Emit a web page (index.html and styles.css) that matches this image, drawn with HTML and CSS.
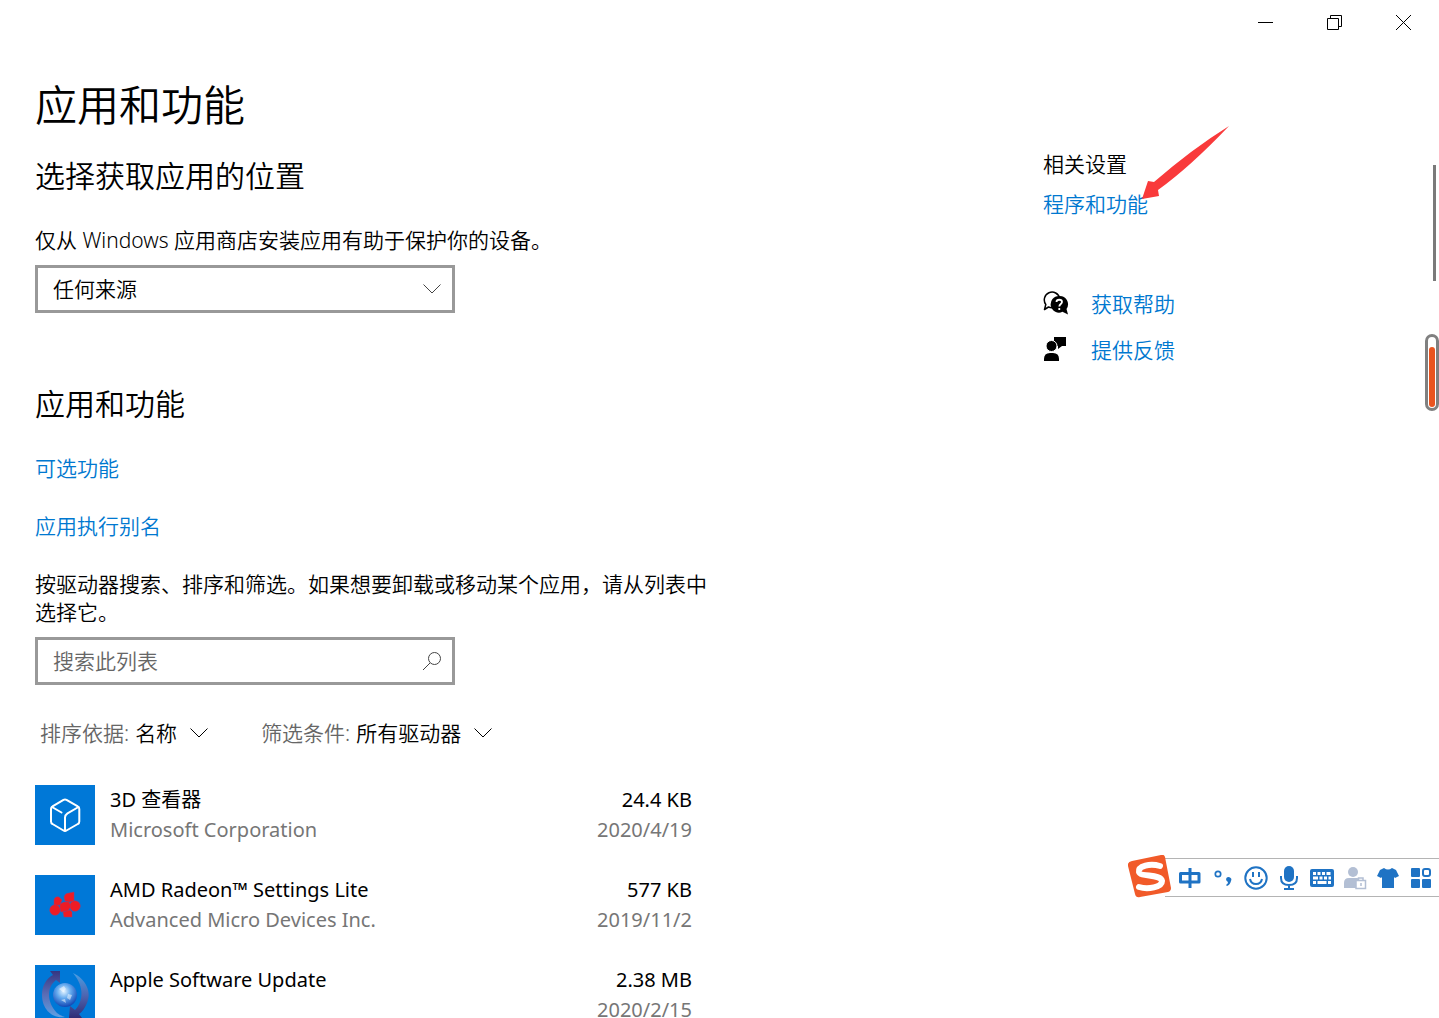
FILE: index.html
```html
<!DOCTYPE html>
<html lang="zh-CN">
<head>
<meta charset="utf-8">
<meta name="viewport" content="width=device-width, initial-scale=1">
<title>设置</title>
<link rel="stylesheet" href="styles.css">
</head>
<body>
<header class="titlebar">
	<button type="button" aria-label="最小化"><svg width="17" height="17" viewBox="0 0 17 17"><path d="M1 8.500h15"/></svg></button>
	<button type="button" aria-label="还原"><svg width="17" height="17" viewBox="0 0 17 17"><path d="M1.500 4.500h11v11h-11zM4.500 4.500v-3h11v11h-3"/></svg></button>
	<button type="button" aria-label="关闭"><svg width="17" height="17" viewBox="0 0 17 17"><path d="M1 1l15 15M16 1L1 16"/></svg></button>
</header>
<div class="page">
	<main class="content">
		<h1>应用和功能</h1>
		<section class="source">
			<h2>选择获取应用的位置</h2>
			<label for="source">仅从 Windows 应用商店安装应用有助于保护你的设备。</label>
			<div class="field">
				<select id="source">
					<option>任何来源</option>
				</select>
				<svg class="chevron" width="20" height="12" viewBox="0 0 20 12"><path d="M1.500 1.500L10 10l8.500-8.500"/></svg>
			</div>
		</section>
		<section class="apps">
			<h2>应用和功能</h2>
			<a class="option" href="#">可选功能</a>
			<a class="option" href="#">应用执行别名</a>
			<label for="search">按驱动器搜索、排序和筛选。如果想要卸载或移动某个应用，请从列表中选择它。</label>
			<div class="field">
				<input type="text" id="search" placeholder="搜索此列表">
				<svg class="glass" width="20" height="20" viewBox="0 0 20 20"><circle cx="12.500" cy="7.500" r="6"/><path d="M8 12l-7 7"/></svg>
			</div>
			<div class="filters">
				<div class="filter">
					<label for="sort">排序依据:</label>
					<select id="sort"><option>名称</option></select>
					<svg class="chevron dark" width="20" height="12" viewBox="0 0 20 12"><path d="M1.500 1.500L10 10l8.500-8.500"/></svg>
				</div>
				<div class="filter">
					<label for="drive">筛选条件:</label>
					<select id="drive"><option>所有驱动器</option></select>
					<svg class="chevron dark" width="20" height="12" viewBox="0 0 20 12"><path d="M1.500 1.500L10 10l8.500-8.500"/></svg>
				</div>
			</div>
			<ul class="appList">
				<li>
					<svg class="appIcon" viewBox="0 0 60 60">
						<g fill="none" stroke="#fff" stroke-width="2" stroke-linejoin="round" stroke-linecap="round"><path d="M28.500 14.800Q30 14 31.500 14.800L42.800 21.300Q44.300 22 44.300 24V36.500Q44.300 38.300 42.800 39L31.500 45.500Q30 46.500 28.500 45.500L17.500 39Q16 38.300 16 36.500V24Q16 22 17.500 21.300z"/><path d="M17 22l9.500 5.500M43.500 22L32.500 28.300Q30 30 30 32.500V45.500"/></g>
					</svg>
					<div class="info"><p>3D 查看器</p><span>Microsoft Corporation</span></div>
					<div class="size"><p>24.4 KB</p><span>2020/4/19</span></div>
				</li>
				<li>
					<svg class="appIcon" viewBox="0 0 60 60">
						<g fill="#ee1c25" stroke="#a03a70" stroke-width=".5"><path d="M29 22q1-4 5-4l5-1v9l-5 1-4-1z"/><path d="M19 25q1-4 5-3l3 3-2 5-6 1z"/><circle cx="20" cy="35" r="5.300"/><circle cx="40" cy="31" r="5.300"/><path d="M25 29q4-3 9-2l2 4-3 5-7 1-1-4z"/><path d="M28 37l7-2 2 2v5h-8z"/></g>
					</svg>
					<div class="info"><p>AMD Radeon™ Settings Lite</p><span>Advanced Micro Devices Inc.</span></div>
					<div class="size"><p>577 KB</p><span>2019/11/2</span></div>
				</li>
				<li>
					<svg class="appIcon" viewBox="0 0 60 60">
						<defs>
							<radialGradient id="globe" cx="45%" cy="35%" r="65%"><stop offset="0" stop-color="#e5f4ff"/><stop offset=".45" stop-color="#63a9ee"/><stop offset="1" stop-color="#1247b4"/></radialGradient>
							<linearGradient id="arcLeft" x1="0" y1="0" x2="0" y2="1"><stop offset="0" stop-color="#353581"/><stop offset=".5" stop-color="#5a6cb4"/><stop offset="1" stop-color="#5fa0e4"/></linearGradient>
							<linearGradient id="arcRight" x1="0" y1="0" x2="0" y2="1"><stop offset="0" stop-color="#4b9fe4"/><stop offset=".5" stop-color="#4e65b0"/><stop offset="1" stop-color="#302c76"/></linearGradient>
						</defs>
						<path fill="url(#arcLeft)" d="M15 6h10v12l-4-3C12 22 11 36 22 48 26 51 30 52 30 52 17 54 7 44 7 30 7 20 12 13 18 10z"/>
						<path fill="url(#arcRight)" d="M38 8C51 14 57 27 52 38c-2 5-5 9-8 11l3 4H34l1-12 5 4c8-8 10-23-2-37z"/>
						<circle cx="30" cy="30" r="12" fill="url(#globe)"/>
						<path fill="#fff" fill-opacity=".5" d="M24 24l5-3 2 3-3 3zM33 29l4 1-2 5-3-2zM26 35l4-1 1 4z"/>
					</svg>
					<div class="info"><p>Apple Software Update</p></div>
					<div class="size"><p>2.38 MB</p><span>2020/2/15</span></div>
				</li>
			</ul>
		</section>
	</main>
	<aside class="related">
		<h3>相关设置</h3>
		<div class="programs">
			<a href="#">程序和功能</a>
			<svg class="arrow" width="90" height="76" viewBox="0 0 90 76"><path fill="#f93a3b" d="M89 1Q52 24 14 57L8 56 2 74l17-3-1-6Q50 42 89 1z"/></svg>
		</div>
		<ul class="support">
			<li>
				<svg width="26" height="26" viewBox="0 0 26 26"><path fill="#fff" stroke="#000" stroke-width="1.500" stroke-linejoin="round" d="M1.500 18.500l1.300-5a7.800 7.800 0 1 1 6.200 3.200q-2 0-3.500-.7z"/><path d="M16 5a8.300 8.300 0 1 0 3.500 15.800l5.500 2.700-1.500-5.500A8.300 8.300 0 0 0 16 5z"/><path fill="none" stroke="#fff" stroke-width="1.800" d="M13.500 11c0-3 5.500-3 5.500 0 0 2-2.700 2-2.700 4.500M16.300 17v2"/></svg>
				<a href="#">获取帮助</a>
			</li>
			<li>
				<svg width="26" height="26" viewBox="0 0 26 26"><path d="M11 0h12v9h-4l-4 3V9h-4z"/><circle cx="8.500" cy="9" r="5.500" stroke="#fff"/><path d="M1 24v-2q0-6 6-6h3q6 0 6 6v2z"/></svg>
				<a href="#">提供反馈</a>
			</li>
		</ul>
	</aside>
</div>

<!-- 滚动条 -->
<div class="scrollbar"></div>
<div class="gauge"><i></i></div>

<!-- 输入法工具栏 -->
<div class="ime">
	<svg class="logo" width="46" height="44" viewBox="0 0 46 44"><path fill="#f15a29" d="M4 6L33 0q3-1 4 2l6 31q0 3-3 4L12 42q-4 1-5-3L0 11q-1-4 4-5z"/><path fill="none" stroke="#fff" stroke-width="6" stroke-linecap="round" d="M32 11C22 8 10 11 11 17c1 5 22 2 23 9 0 6-14 9-23 6"/></svg>
	<button type="button" aria-label="中文"><svg width="24" height="24" viewBox="0 0 24 24"><path fill="none" stroke="#1f73c4" stroke-width="3" stroke-linejoin="round" d="M2.500 7.500h18.500v8.500H2.500zM12 2v20"/></svg></button>
	<button type="button" aria-label="标点"><svg width="24" height="24" viewBox="0 0 24 24"><circle cx="7" cy="8" r="2.700" fill="none" stroke="#1f73c4" stroke-width="1.700"/><path d="M15 13a2.700 2.700 0 1 1 5 2q-1 4-4 5l-1-1q2-1 2-3-2-1-2-3z"/></svg></button>
	<button type="button" aria-label="表情"><svg width="24" height="24" viewBox="0 0 24 24"><g fill="none" stroke="#1f73c4" stroke-width="2"><circle cx="12" cy="12" r="10.700"/><path d="M9 6v5M15 6v5M6 13q1 5 6 5t6-5"/></g></svg></button>
	<button type="button" aria-label="语音"><svg width="24" height="24" viewBox="0 0 24 24"><rect x="7" y="0" width="10" height="16" rx="5"/><path fill="none" stroke="#1f73c4" stroke-width="2" d="M4 10v2q0 7 8 7t8-7v-2M12 19v4M7 23h10"/></svg></button>
	<button type="button" aria-label="软键盘"><svg width="24" height="24" viewBox="0 0 24 24"><rect x="0" y="3" width="24" height="18" rx="2"/><path fill="none" stroke="#fff" stroke-width="3" d="M3 7.500h3M7.500 7.500h3M12 7.500h3M16.500 7.500h4M3 12h5M9.500 12h3M14 12h3M18.500 12h2.500M3 16.500h3M7.500 16.500h9M18 16.500h3"/></svg></button>
	<button type="button" aria-label="登录"><svg width="24" height="24" viewBox="0 0 24 24"><g fill="#b3bfd4"><circle cx="10" cy="6" r="5"/><path d="M1 22v-5q0-5 5-5h8q4 0 4 4v6z"/></g><path fill="#fff" stroke="#b3bfd4" stroke-width="1.500" d="M13 14.500h9.500v8H13zM15.500 14v-2h4.500v2M18 17v3"/></svg></button>
	<button type="button" aria-label="皮肤"><svg width="24" height="24" viewBox="0 0 24 24"><path d="M8 2q4 3 8 0l4 2 3 6-4 2-1-1v11H6V11l-1 1-4-2 3-6z"/></svg></button>
	<button type="button" aria-label="工具箱"><svg width="24" height="24" viewBox="0 0 24 24"><rect x="2" y="2" width="9" height="9" rx="1"/><rect x="2" y="13" width="9" height="9" rx="1"/><rect x="13" y="13" width="9" height="9" rx="1"/><rect x="14" y="3" width="7" height="7" rx="2" fill="none" stroke="#1f73c4" stroke-width="2"/></svg></button>
</div>
</body>
</html>
```
FILE: styles.css
```css
*{
	box-sizing: border-box;
}
body{
	position: relative;
	height: 100vh;
	margin: 0;
	overflow: hidden;
	background: #fff;
	color: #000;
	font: 21px/28px "Noto Sans","Noto Sans CJK SC",sans-serif;
	font-weight: 350;
}
h1,h2,h3,p,ul{
	margin: 0;
	padding: 0;
	font-weight: inherit;
}
ul{
	list-style: none;
}
a{
	color: #0078d0;
	text-decoration: none;
}
svg{
	display: block;
	flex: none;
}
button,input,select{
	font: inherit;
	color: inherit;
	border: 0;
	margin: 0;
	padding: 0;
	background: none;
	border-radius: 0;
	appearance: none;
}

/* 标题栏 */
.titlebar{
	display: flex;
	justify-content: flex-end;
	height: 45px;
	padding-right: 1px;
}
.titlebar button{
	display: flex;
	align-items: center;
	justify-content: center;
	width: 69px;
}
.titlebar svg{
	fill: none;
	stroke: #000;
}

.page{
	display: grid;
	grid-template-columns: 1fr 396px;
	padding-left: 35px;
}
.content{
	max-width: 675px;
	padding-top: 30px;
}
h1{
	font-size: 42px;
	line-height: 60px;
}
h2{
	font-size: 30px;
	line-height: 40px;
}
.source{
	padding-top: 21px;
}
.content section>label{
	display: block;
	margin: 30px 0 11px;
}
.field{
	position: relative;
	width: 420px;
	max-width: 100%;
}
.field select,.field input{
	display: block;
	width: 100%;
	height: 48px;
	padding: 0 45px 0 15px;
	border: 3px solid #999;
}
.field input::placeholder{
	color: #666;
	opacity: 1;
}
.chevron,.glass{
	fill: none;
	stroke: #444;
	pointer-events: none;
}
.dark{
	stroke: #000;
}
.field svg{
	position: absolute;
	top: 0;
	bottom: 0;
	right: 13px;
	margin: auto 0;
}
.apps{
	padding-top: 71px;
}
.option{
	display: table;
	margin-top: 30px;
}
.filters{
	display: flex;
	gap: 52px;
	padding: 34px 5px 38px;
}
.filter{
	display: flex;
	align-items: center;
}
.filter label{
	color: #666;
	margin-right: 6px;
}
.filter .chevron{
	margin-left: 12px;
}

/* 应用列表 */
.appList{
	padding-right: 18px;
	font-size: 20px;
	font-weight: 400;
	line-height: 30px;
}
.appList li{
	display: flex;
	gap: 15px;
	margin-bottom: 30px;
}
.appIcon{
	width: 60px;
	height: 60px;
	background: #0078d7;
}
.info{
	flex: 1;
}
.size{
	text-align: right;
}
.appList span{
	color: #767676;
}

/* 右侧 */
.related{
	padding-top: 105px;
}
.related h3{
	font-size: 21px;
}
.programs{
	position: relative;
	margin-top: 12px;
}
.arrow{
	position: absolute;
	left: 97px;
	bottom: 17px;
}
.support{
	padding-top: 72px;
}
.support li{
	display: flex;
	align-items: center;
	gap: 22px;
	margin-bottom: 18px;
}

.scrollbar{
	position: absolute;
	top: 165px;
	right: 3px;
	width: 3px;
	height: 116px;
	background: #7a7a7a;
}
.gauge{
	position: absolute;
	top: 334px;
	right: 0;
	width: 14px;
	height: 77px;
	padding: 10px 1px 1px;
	border: 3px solid #808080;
	border-radius: 7px;
}
.gauge i{
	display: block;
	height: 100%;
	border-radius: 3px;
	background: #e95420;
}

/* 输入法 */
.ime{
	position: absolute;
	right: 0;
	bottom: 121px;
	display: flex;
	align-items: center;
	gap: 9px;
	height: 39px;
	padding: 0 6px 0 13px;
	border: solid #b4b4b4;
	border-width: 1px 0;
	background: #fff;
	fill: #1f73c4;
}
.ime .logo{
	position: absolute;
	left: -37px;
	top: -4px;
}
```
